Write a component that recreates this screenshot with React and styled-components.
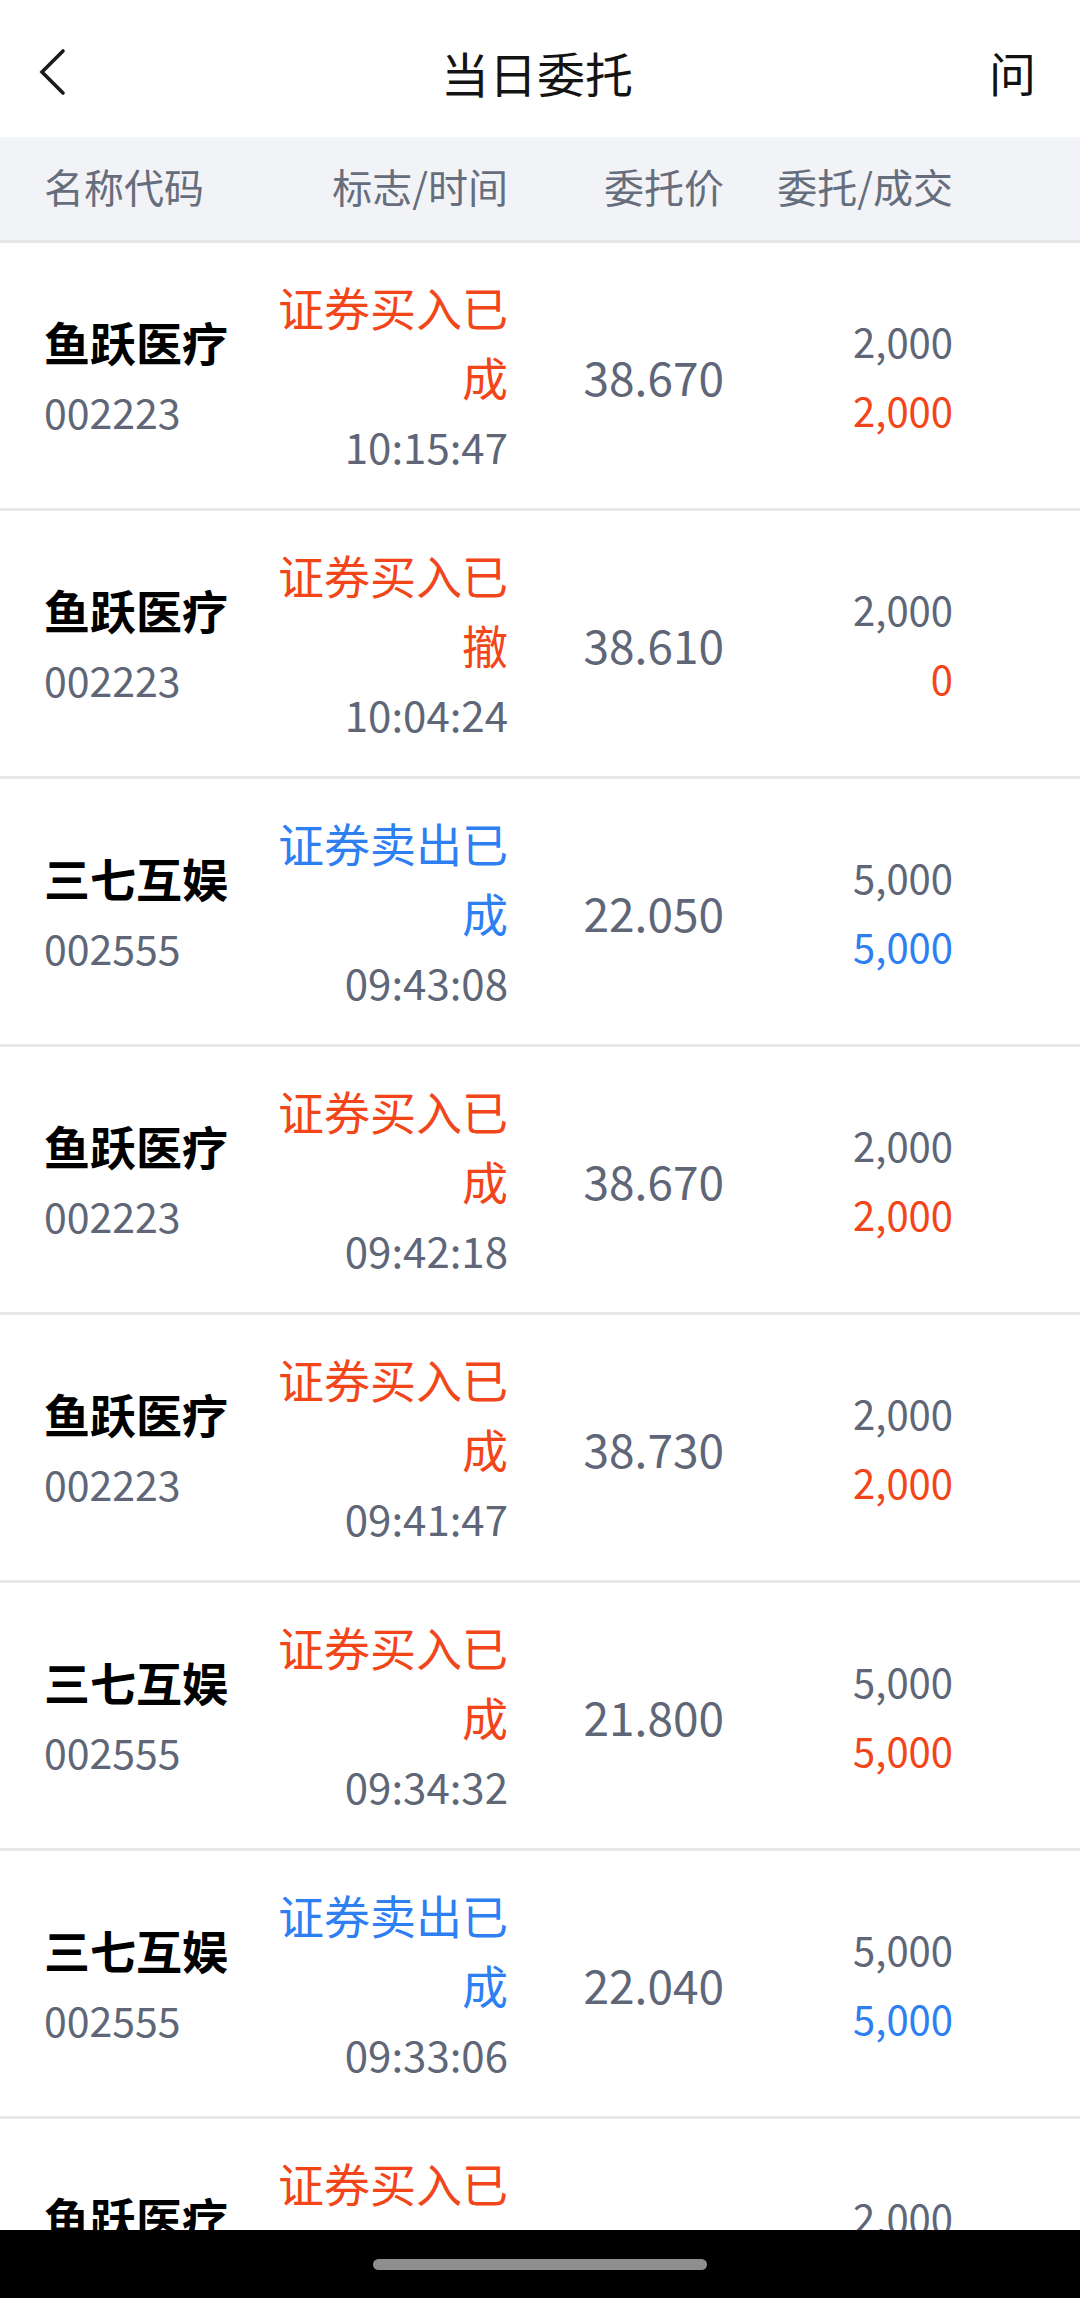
import React from "react";
import styled, { createGlobalStyle } from "styled-components";

const Global = createGlobalStyle`
  html, body { margin: 0; padding: 0; background: #fff; }
  body { font-family: "Noto Sans CJK SC", "Noto Sans", sans-serif; }
  * { box-sizing: border-box; }
`;

const RED = "#f2461a";
const BLUE = "#2e7ff2";
const GRAY = "#5e6677";

const Page = styled.div`
  width: 1080px;
  min-height: 2298px;
  background: #fff;
`;

const NavBar = styled.div`
  height: 137px;
  padding: 6px 44px 0 38px;
  display: grid;
  grid-template-columns: 120px 1fr 120px;
  align-items: center;
`;

const BackBtn = styled.div`
  display: flex;
  align-items: center;
`;

const Title = styled.div`
  text-align: center;
  font-size: 48px;
  color: #141414;
  line-height: 64px;
`;

const HelpBtn = styled.div`
  text-align: right;
  font-size: 47px;
  color: #111;
  line-height: 64px;
`;

const Cols = `
  display: grid;
  grid-template-columns: 232px 232px 216px 229px;
  padding: 0 44px;
  align-items: center;
`;

const HeadRow = styled.div`
  ${Cols}
  height: 106px;
  padding-bottom: 5px;
  background: #f2f3f6;
  border-bottom: 3px solid #e4e6ea;
`;

const HeadCell = styled.div`
  font-size: 40px;
  line-height: 56px;
  color: #666d7c;
  text-align: ${(p) => (p.$left ? "left" : "right")};
`;

const Row = styled.div`
  ${Cols}
  height: 268px;
  border-bottom: 3px solid #e6e8ec;
`;

const NameCell = styled.div`
  display: flex;
  flex-direction: column;
`;

const Name = styled.div`
  font-size: 46px;
  font-weight: 700;
  color: #000;
  line-height: 70px;
`;

const Code = styled.div`
  font-size: 41px;
  color: ${GRAY};
  line-height: 70px;
`;

const StatusCell = styled.div`
  display: flex;
  flex-direction: column;
  align-items: flex-end;
  text-align: right;
`;

const Status = styled.div`
  font-size: 46px;
  line-height: 70px;
  color: ${(p) => (p.$sell ? BLUE : RED)};
  width: 232px;
`;

const Time = styled.div`
  font-size: 42px;
  line-height: 70px;
  color: ${GRAY};
`;

const Price = styled.div`
  font-size: 46px;
  color: ${GRAY};
  text-align: right;
  line-height: 68px;
`;

const QtyCell = styled.div`
  display: flex;
  flex-direction: column;
  align-items: flex-end;
`;

const Qty = styled.div`
  font-size: 40px;
  line-height: 69px;
  color: ${(p) => p.$color || GRAY};
`;

const NavSystemBar = styled.div`
  position: fixed;
  left: 0;
  right: 0;
  bottom: 0;
  height: 68px;
  background: #000;
  display: flex;
  justify-content: center;
  align-items: center;
`;

const Pill = styled.div`
  width: 334px;
  height: 11px;
  border-radius: 6px;
  background: #8e8e8e;
`;

const data = [
  { name: "鱼跃医疗", code: "002223", sell: false, st: "证券买入已成", time: "10:15:47", price: "38.670", q1: "2,000", q2: "2,000" },
  { name: "鱼跃医疗", code: "002223", sell: false, st: "证券买入已撤", time: "10:04:24", price: "38.610", q1: "2,000", q2: "0" },
  { name: "三七互娱", code: "002555", sell: true, st: "证券卖出已成", time: "09:43:08", price: "22.050", q1: "5,000", q2: "5,000" },
  { name: "鱼跃医疗", code: "002223", sell: false, st: "证券买入已成", time: "09:42:18", price: "38.670", q1: "2,000", q2: "2,000" },
  { name: "鱼跃医疗", code: "002223", sell: false, st: "证券买入已成", time: "09:41:47", price: "38.730", q1: "2,000", q2: "2,000" },
  { name: "三七互娱", code: "002555", sell: false, st: "证券买入已成", time: "09:34:32", price: "21.800", q1: "5,000", q2: "5,000" },
  { name: "三七互娱", code: "002555", sell: true, st: "证券卖出已成", time: "09:33:06", price: "22.040", q1: "5,000", q2: "5,000" },
  { name: "鱼跃医疗", code: "002223", sell: false, st: "证券买入已成", time: "09:31:15", price: "38.700", q1: "2,000", q2: "2,000" },
];

export default function App() {
  return (
    <Page>
      <Global />
      <NavBar>
        <BackBtn>
          <svg width="30" height="50" viewBox="0 0 30 50" fill="none">
            <path d="M25 4 L4 25 L25 46" stroke="#1a1a1a" strokeWidth="3.6" strokeLinecap="round" strokeLinejoin="miter" />
          </svg>
        </BackBtn>
        <Title>当日委托</Title>
        <HelpBtn>问</HelpBtn>
      </NavBar>
      <HeadRow>
        <HeadCell $left>名称代码</HeadCell>
        <HeadCell>标志/时间</HeadCell>
        <HeadCell>委托价</HeadCell>
        <HeadCell>委托/成交</HeadCell>
      </HeadRow>
      {data.map((d, i) => {
        const c = d.sell ? BLUE : RED;
        return (
          <Row key={i}>
            <NameCell>
              <Name>{d.name}</Name>
              <Code>{d.code}</Code>
            </NameCell>
            <StatusCell>
              <Status $sell={d.sell}>{d.st}</Status>
              <Time>{d.time}</Time>
            </StatusCell>
            <Price>{d.price}</Price>
            <QtyCell>
              <Qty>{d.q1}</Qty>
              <Qty $color={c}>{d.q2}</Qty>
            </QtyCell>
          </Row>
        );
      })}
      <NavSystemBar>
        <Pill />
      </NavSystemBar>
    </Page>
  );
}
